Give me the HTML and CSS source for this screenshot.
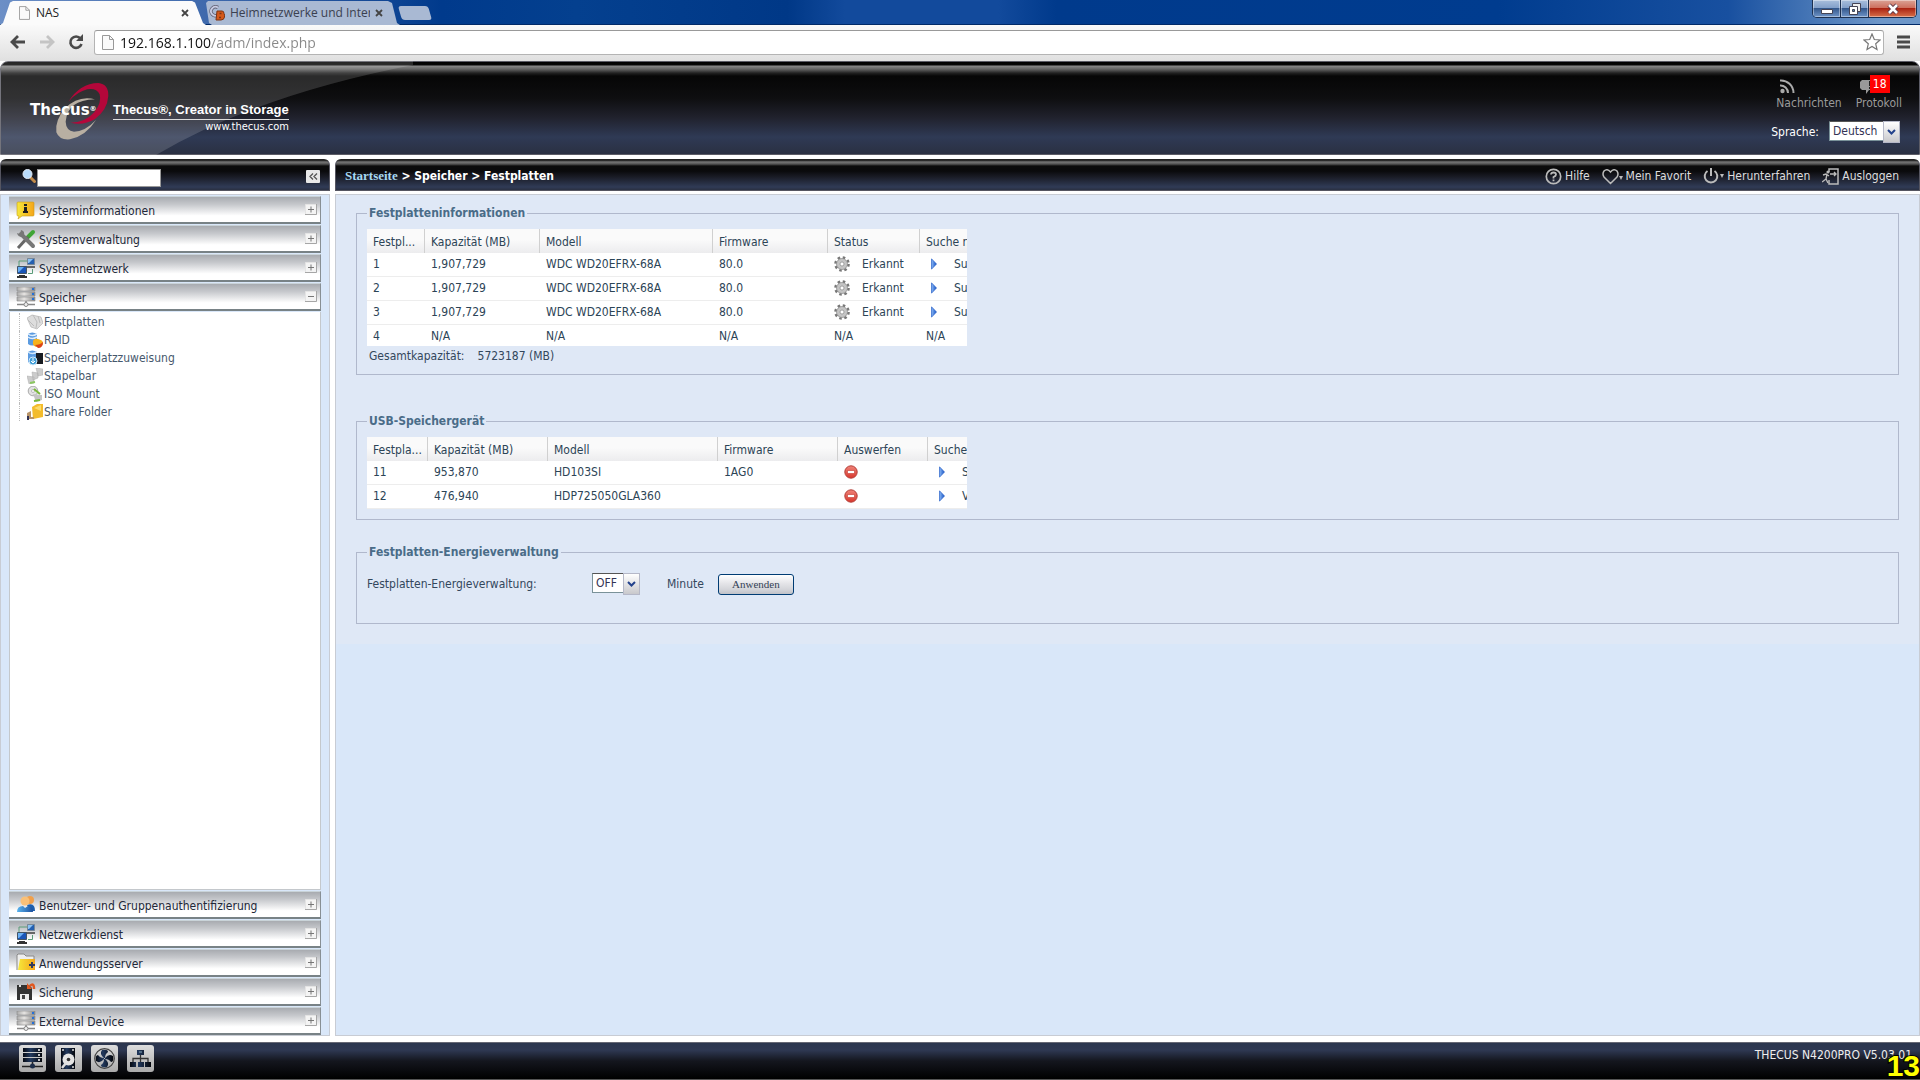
FILE: index.html
```
<!DOCTYPE html>
<html lang="de">
<head>
    <meta charset="UTF-8">
    <meta name="viewport" content="width=device-width, initial-scale=1.0">
    <title>NAS</title>
    <link rel="stylesheet" href="styles.css">
</head>
<body>

<!-- shared icons -->
<svg class="defs" aria-hidden="true">
    <defs>
        <linearGradient id="metal" x1="0" y1="0" x2="1" y2="0"><stop offset="0" stop-color="#aaa"/><stop offset=".4" stop-color="#e6e4e2"/><stop offset="1" stop-color="#888"/></linearGradient>
        <linearGradient id="gold" x1="0" y1="0" x2="1" y2="0"><stop offset="0" stop-color="#f6e83a"/><stop offset="1" stop-color="#f5a51b"/></linearGradient>
        <linearGradient id="blue" x1="0" y1="0" x2="1" y2="0"><stop offset="0" stop-color="#5ab4ee"/><stop offset="1" stop-color="#1b4f9e"/></linearGradient>
        <linearGradient id="ink" x1="0" y1="0" x2="1" y2="0"><stop offset="0" stop-color="#060a12"/><stop offset=".4" stop-color="#22395e"/><stop offset="1" stop-color="#05070c"/></linearGradient>
        <linearGradient id="play" x1="0" y1="0" x2="1" y2="0"><stop offset="0" stop-color="#8ab8f4"/><stop offset="1" stop-color="#1350c4"/></linearGradient>
        <linearGradient id="red" x1="0" y1="0" x2="0" y2="1"><stop offset="0" stop-color="#f0857a"/><stop offset="1" stop-color="#d8362c"/></linearGradient>
    </defs>
    <symbol id="i-page" viewBox="0 0 12 15"><path d="M.5 .5H7.500L11.500 4.500V14.500H.5Z" fill="#fafafa" stroke="#999"/><path d="M7.500 .5V4.500H11.500" fill="none" stroke="#999"/></symbol>
    <symbol id="i-close" viewBox="0 0 8 8"><path d="M1 1L7 7M7 1L1 7" stroke="#444" stroke-width="1.800"/></symbol>
    <symbol id="i-plus" viewBox="0 0 12 11"><path d="M.5 .5H11.500V10.500H.5Z" fill="#f4f4f4" stroke="#e4e4e4"/><path d="M0 10.500H11.500V0" fill="none" stroke="#a6a6a6"/><path d="M3 5.500H9M6 2.500V8.500" stroke="#777"/></symbol>
    <symbol id="i-minus" viewBox="0 0 12 11"><path d="M.5 .5H11.500V10.500H.5Z" fill="#f4f4f4" stroke="#e4e4e4"/><path d="M0 10.500H11.500V0" fill="none" stroke="#a6a6a6"/><path d="M3 5.500H9" stroke="#777"/></symbol>
    <symbol id="i-info" viewBox="0 0 20 20"><path d="M2 2H17Q18 2 18 3V15Q18 16 17 16H6L2 19L3 16H2Q1 16 1 15V3Q1 2 2 2Z" fill="url(#gold)" stroke="#c79a18" stroke-width=".6"/><path d="M8 4H11V6H8ZM8 7H11V11H12V13H7V11H8Z" fill="#222"/></symbol>
    <symbol id="i-tools" viewBox="0 0 20 20"><path d="M17 3L12 8" stroke="#3fa535" stroke-width="4" stroke-linecap="round"/><path d="M12 8L2 19" stroke="#666" stroke-width="3"/><path d="M5 5L17 17" stroke="#777" stroke-width="4" stroke-linecap="round"/><path d="M1 4L4 5L5 1Q9 2 8 6L6 8Q2 8 1 4Z" fill="#777"/></symbol>
    <symbol id="i-net" viewBox="0 0 20 20"><path d="M3 8V3H11M12 15.500H16.500V11" fill="none" stroke="#5a9c78"/><path d="M11.500 .5H18.500V6.500H11.500Z" fill="#2560b0" stroke="#789"/><path d="M12 1H17L13 5H12Z" fill="#8cc2f4"/><path d="M10 8H19V10H10Z" fill="#666"/><path d="M1.500 8.500H10.500V15.500H1.500Z" fill="#1a56b8" stroke="#456"/><path d="M2 9H8L3 14H2Z" fill="#6ab0f4"/><path d="M3 17H9V18H11V20H1V18H3Z" fill="#333"/></symbol>
    <symbol id="i-server" viewBox="0 0 20 20"><path d="M1 0H19V4H1ZM1 5H19V9H1ZM1 10H19V14H1Z" fill="url(#metal)" stroke="#8c8c8c" stroke-width=".6"/><path d="M16 2H18M16 7H18M16 12H18" stroke="#2470d8" stroke-width="2"/><path d="M1 17.500H19M10 14V17" stroke="#888" stroke-width="1.500"/><circle cx="10" cy="17.500" r="2" fill="#eee" stroke="#888"/></symbol>
    <symbol id="i-users" viewBox="0 0 20 20"><circle cx="14" cy="5" r="4" fill="#f0a04c"/><path d="M11 10Q19 7 19 16H14Z" fill="#1d5fae"/><circle cx="9" cy="6" r="4.500" fill="#f9c078"/><path d="M1 17Q1 11 7 11L9 13L12 11Q17 11 17 17Z" fill="url(#blue)"/></symbol>
    <symbol id="i-folder" viewBox="0 0 20 20"><path d="M1 17V2L2 1H8L10 3H18V6" fill="#eee" stroke="#888"/><path d="M4 6H19V17H2Z" fill="url(#gold)"/><path d="M13 12H19M16 9V15" stroke="#333a5c" stroke-width="2"/></symbol>
    <symbol id="i-backup" viewBox="0 0 20 20"><path d="M1 3H13L16 6V18H1Z" fill="#333"/><path d="M3 3H5V5H3Z" fill="#ddd"/><path d="M4 12H13V18H4Z" fill="#eee"/><path d="M6 13H9V17H6Z" fill="#444"/><path d="M14 4Q18 0 18 7" fill="none" stroke="#e2571e" stroke-width="2.500"/><path d="M11 1V7H16Z" fill="#e2571e"/></symbol>
    <symbol id="i-gear" viewBox="0 0 16 16"><circle cx="8" cy="8" r="6.500" fill="none" stroke="#777" stroke-width="2.600" stroke-dasharray="2.500 2.600"/><circle cx="8" cy="8" r="5.500" fill="#c4c4c4" stroke="#888" stroke-width=".7"/><circle cx="8" cy="8" r="2" fill="#fff" stroke="#888" stroke-width=".7"/></symbol>
    <symbol id="i-play" viewBox="0 0 6 12"><path d="M.5 .8L5.500 6L.5 11.200Z" fill="url(#play)" stroke="#2a62c8" stroke-width=".7"/></symbol>
    <symbol id="i-stop" viewBox="0 0 14 14"><circle cx="7" cy="7" r="6.200" fill="url(#red)" stroke="#b4403a"/><path d="M3.500 5.500H10.500V8.500H3.500Z" fill="#fff" stroke="#c4382e" stroke-width=".6"/></symbol>
    <symbol id="i-chev" viewBox="0 0 9 6"><path d="M1 1L4.500 4.500L8 1" fill="none" stroke="#23428c" stroke-width="2"/></symbol>
</svg>

<div class="titlebar">
    <div class="tabs">
        <div class="tab tab-active">
            <svg class="tab-icon" width="11" height="14"><use href="#i-page"/></svg>
            <span class="tab-title">NAS</span>
            <button class="tab-close" aria-label="Tab schließen"><svg width="8" height="8"><use href="#i-close"/></svg></button>
        </div>
        <div class="tab tab-back">
            <svg class="tab-icon" width="16" height="16" viewBox="0 0 16 16"><path d="M9 2.500A4.500 4.500 0 1 0 9 10" fill="none" stroke="#667" stroke-width="3.500"/><path d="M9 2.500A4.500 4.500 0 1 0 9 10" fill="none" stroke="#c8cce4" stroke-width="1.800"/><path d="M8 6H13Q15 6 15 8.500Q16 10 15.500 12Q15 15 12 15H7Z" fill="#d4581a" stroke="#7c3414"/><path d="M10.500 8.500H12.500M10 12.500H12" stroke="#7c3414" stroke-width="1.500"/></svg>
            <span class="tab-title">Heimnetzwerke und Intern</span>
            <button class="tab-close" aria-label="Tab schließen"><svg width="8" height="8"><use href="#i-close"/></svg></button>
        </div>
        <button class="tab-new" aria-label="Neuer Tab"></button>
    </div>
    <div class="win-buttons">
        <button class="win" aria-label="Minimieren"><svg width="12" height="12" viewBox="0 0 12 12"><path d="M.5 6.500H11.500V10.500H.5Z" fill="#fff" stroke="#445"/></svg></button>
        <button class="win" aria-label="Verkleinern"><svg width="12" height="12" viewBox="0 0 12 12"><path d="M3.500 .5H11.500V8.500H3.500Z" fill="#eee" stroke="#445"/><path d="M.5 3.500H8.500V11.500H.5Z" fill="#fff" stroke="#445"/><path d="M3.500 6.500H5.500V8.500H3.500Z" fill="#58a" stroke="#445"/></svg></button>
        <button class="win win-close" aria-label="Schließen"><svg width="12" height="12" viewBox="0 0 12 12"><path d="M2 2L10 10M10 2L2 10" stroke="#534" stroke-width="4.500"/><path d="M2 2L10 10M10 2L2 10" stroke="#fff" stroke-width="2.600"/></svg></button>
    </div>
</div>

<div class="toolbar">
    <button class="nav" aria-label="Zurück"><svg width="16" height="14" viewBox="0 0 16 14"><path d="M8 1L2 7L8 13M2 7H15" fill="none" stroke="#4a4a4a" stroke-width="2.800"/></svg></button>
    <button class="nav" aria-label="Vorwärts"><svg width="16" height="14" viewBox="0 0 16 14"><path d="M8 1L14 7L8 13M14 7H1" fill="none" stroke="#c4c4c4" stroke-width="2.800"/></svg></button>
    <button class="nav" aria-label="Neu laden"><svg width="16" height="16" viewBox="0 0 16 16"><path d="M12.500 4.500A5.700 5.700 0 1 0 13.500 10" fill="none" stroke="#4a4a4a" stroke-width="2.600"/><path d="M15 0V7H8Z" fill="#4a4a4a"/></svg></button>
    <div class="omnibox">
        <svg width="12" height="15"><use href="#i-page"/></svg>
        <input class="url" type="text" value="192.168.1.100/adm/index.php" aria-label="Adresse">
        <button class="star" aria-label="Lesezeichen"><svg width="18" height="18" viewBox="0 0 18 18"><path d="M9 1L11.300 6.500L17 7L12.700 10.800L14 16.500L9 13.500L4 16.500L5.300 10.800L1 7L6.700 6.500Z" fill="#fff" stroke="#777" stroke-width="1.200"/></svg></button>
    </div>
    <button class="menu" aria-label="Menü"><svg width="13" height="14" viewBox="0 0 13 14"><path d="M0 2H13M0 7H13M0 12H13" stroke="#4a4a4a" stroke-width="3"/></svg></button>
</div>

<header class="header">
    <svg class="brand" width="420" height="94" viewBox="0 0 420 94">
        <path d="M0 0H413V4Q258 34 156 94H0Z" fill="#fff" fill-opacity=".15"/>
        <g transform="scale(.3333) translate(0 -183)">
            <path d="M205 305Q240 250 295 249Q326 252 325 288Q322 330 285 357Q250 378 212 368Q255 368 283 337Q306 308 299 283Q290 264 262 268Q232 275 205 305Z" fill="#b4073a"/>
            <path d="M285 298Q235 285 195 325Q164 362 169 397Q178 421 210 418Q258 408 288 360Q255 395 222 395Q198 392 197 365Q202 300 285 298Z" fill="#b8afa2"/>
        </g>
        <text x="30" y="54" class="brand-name">Thecus<tspan class="brand-reg" dy="-4">®</tspan></text>
        <text x="113" y="53" class="brand-slogan">Thecus®, Creator in Storage</text>
        <path d="M113 58.500H289" stroke="#ddd"/>
        <text x="289" y="69" text-anchor="end" class="brand-url">www.thecus.com</text>
    </svg>
    <div class="header-tools">
        <div class="notices">
            <a href="#" class="notice">
                <svg width="15" height="15" viewBox="0 0 15 15"><circle cx="2.500" cy="12" r="2.200" fill="#aaa"/><path d="M0 6.500A7.500 7.500 0 0 1 8 14M0 1.500A12.500 12.500 0 0 1 13.500 14" fill="none" stroke="#aaa" stroke-width="2"/></svg>
                Nachrichten
            </a>
            <a href="#" class="notice">
                <svg width="15" height="15" viewBox="0 0 15 15"><path d="M2 1H13V11H9L6 15V11H2L0 9V3Z" fill="#999"/><path d="M10 2V7M10 8V10" stroke="#222" stroke-width="2"/></svg>
                Protokoll
                <span class="badge">18</span>
            </a>
        </div>
        <div class="language">
            <label for="lang">Sprache:</label>
            <span class="combo">
                <select id="lang" class="combo-lang"><option>Deutsch</option><option>English</option></select>
                <span class="combo-arrow"><svg width="9" height="6"><use href="#i-chev"/></svg></span>
            </span>
        </div>
    </div>
</header>

<div class="layout">
    <aside class="sidebar">
        <div class="bar search-bar">
            <svg width="14" height="14" viewBox="0 0 14 14"><path d="M8.500 8.500L12.500 12.500" stroke="#c08a4a" stroke-width="3" stroke-linecap="round"/><circle cx="5.500" cy="5" r="4.500" fill="#b9dcfb" stroke="#e4ecf6"/></svg>
            <input class="search" type="text" aria-label="Suche">
            <button class="collapse" aria-label="Einklappen"><svg width="9" height="7" viewBox="0 0 9 7"><path d="M4 .5L1 3.500L4 6.500M8 .5L5 3.500L8 6.500" fill="none" stroke="#555" stroke-width="1.300"/></svg></button>
        </div>
        <nav class="panel menu-panel">
            <button class="group"><svg width="20" height="20"><use href="#i-info"/></svg><span>Systeminformationen</span><svg width="12" height="11"><use href="#i-plus"/></svg></button>
            <button class="group"><svg width="20" height="20"><use href="#i-tools"/></svg><span>Systemverwaltung</span><svg width="12" height="11"><use href="#i-plus"/></svg></button>
            <button class="group"><svg width="20" height="20"><use href="#i-net"/></svg><span>Systemnetzwerk</span><svg width="12" height="11"><use href="#i-plus"/></svg></button>
            <button class="group"><svg width="20" height="20"><use href="#i-server"/></svg><span>Speicher</span><svg width="12" height="11"><use href="#i-minus"/></svg></button>
            <ul class="tree">
                <li><a href="#"><svg width="16" height="16" viewBox="0 0 16 16"><path d="M0 4L5 1L14 3L16 9L10 15L4 13Z" fill="#ddd" stroke="#aaa" stroke-width=".6"/><path d="M6 1L10 8L9 14M1 6L7 12M11 2L13 9" fill="none" stroke="#bbb"/></svg>Festplatten</a></li>
                <li><a href="#"><svg width="16" height="16" viewBox="0 0 16 16"><path d="M1 2Q5 -1 10 2V12Q5 15 1 12Z" fill="#5b9be0"/><path d="M1 5Q5 8 10 5M1 2Q5 5 10 2" fill="none" stroke="#e0eefc" stroke-width="1.500"/><path d="M6 9Q7 6 11 7Q16 8 16 11T11 15Q5 15 6 9Z" fill="#f7b21c"/><path d="M8 13Q13 13 16 10Q16 16 11 16Z" fill="#dc4418"/></svg>RAID</a></li>
                <li><a href="#"><svg width="16" height="16" viewBox="0 0 16 16"><path d="M1 2Q5 -1 10 2V12Q5 15 1 12Z" fill="#5b9be0"/><path d="M1 2Q5 5 10 2" fill="none" stroke="#d0e6fa" stroke-width="1.500"/><path d="M9 3H16V14H9Z" fill="#181c22"/><circle cx="6" cy="11" r="4" fill="#3f9ed8" stroke="#cfe8fa"/><path d="M6 8V13M4 11L6 13L8 11" fill="none" stroke="#fff"/></svg>Speicherplatzzuweisung</a></li>
                <li><a href="#"><svg width="16" height="16" viewBox="0 0 16 16"><path d="M9 0L16 1V7L11 8ZM5 4L11 5V10L6 12ZM0 8L7 9V15L2 16Z" fill="#ccc" stroke="#aaa" stroke-width=".5"/><path d="M3 15L8 14" stroke="#8cc860" stroke-width="2"/></svg>Stapelbar</a></li>
                <li><a href="#"><svg width="16" height="16" viewBox="0 0 16 16"><circle cx="6" cy="5" r="4.800" fill="#e2e2e2" stroke="#aaa"/><circle cx="6" cy="5" r="1.500" fill="#fff" stroke="#bbb"/><path d="M6 8L15 9V14L9 16Z" fill="#c4c4c4"/><path d="M7 3L13 8M7 15L13 14" stroke="#78b838" stroke-width="2"/></svg>ISO Mount</a></li>
                <li><a href="#"><svg width="16" height="16" viewBox="0 0 16 16"><path d="M5 3L10 0H16V13L6 15Z" fill="#f3bc2c"/><path d="M7 4L14 1V7Z" fill="#fbdc6c"/><path d="M0 9L4 7V13H7V15H0Z" fill="#b89468"/><path d="M0 12H2V16H0Z" fill="#335"/></svg>Share Folder</a></li>
            </ul>
            <button class="group"><svg width="20" height="20"><use href="#i-users"/></svg><span>Benutzer- und Gruppenauthentifizierung</span><svg width="12" height="11"><use href="#i-plus"/></svg></button>
            <button class="group"><svg width="20" height="20"><use href="#i-net"/></svg><span>Netzwerkdienst</span><svg width="12" height="11"><use href="#i-plus"/></svg></button>
            <button class="group"><svg width="20" height="20"><use href="#i-folder"/></svg><span>Anwendungsserver</span><svg width="12" height="11"><use href="#i-plus"/></svg></button>
            <button class="group"><svg width="20" height="20"><use href="#i-backup"/></svg><span>Sicherung</span><svg width="12" height="11"><use href="#i-plus"/></svg></button>
            <button class="group"><svg width="20" height="20"><use href="#i-server"/></svg><span>External Device</span><svg width="12" height="11"><use href="#i-plus"/></svg></button>
        </nav>
    </aside>

    <main class="main">
        <div class="bar top-bar">
            <div class="crumbs"><a href="#">Startseite</a> &gt; Speicher &gt; Festplatten</div>
            <div class="actions">
                <a href="#"><svg width="17" height="17" viewBox="0 0 17 17"><circle cx="8.500" cy="8.500" r="7.200" fill="none" stroke="#bbb" stroke-width="1.700"/><path d="M6 6.500Q6 4.500 8.500 4.500T11 6.500Q11 8 8.500 9V10.500M8.500 11.500V13.300" fill="none" stroke="#bbb" stroke-width="1.800"/></svg>Hilfe</a>
                <a href="#"><svg width="21" height="17" viewBox="0 0 21 17"><path d="M8.500 15.500L2 9Q0 6 2 3Q5 0 8.500 4Q12 0 15 3Q17 6 15 9Z" fill="none" stroke="#bbb" stroke-width="1.500"/><path d="M17 8H21L19 12Z" fill="#bbb"/></svg>Mein Favorit</a>
                <a href="#"><svg width="21" height="17" viewBox="0 0 21 17"><path d="M4.500 3A6.300 6.300 0 1 0 11.500 3M8 0V8" fill="none" stroke="#bbb" stroke-width="2"/><path d="M17 6H21L19 10Z" fill="#bbb"/></svg>Herunterfahren</a>
                <a href="#"><svg width="17" height="17" viewBox="0 0 17 17"><path d="M7 4V1H16V16H7V12" fill="none" stroke="#bbb" stroke-width="1.500"/><circle cx="6" cy="4" r="1.600" fill="#bbb"/><path d="M1 7L4 6L7 8M5 6L4 11L6 15M4 11L0 14M8 6H14M12 4L14 6L12 8" fill="none" stroke="#bbb" stroke-width="1.400"/></svg>Ausloggen</a>
            </div>
        </div>
        <div class="panel content-panel">
            <form class="content">
                <fieldset class="box box-disks">
                    <legend>Festplatteninformationen</legend>
                    <div class="grid grid-disks">
                        <table class="disks">
                            <colgroup><col class="w58"><col class="w115"><col class="w173"><col class="w115"><col class="w92"><col class="w115"></colgroup>
                            <thead>
                                <tr><th>Festpl...</th><th>Kapazität (MB)</th><th>Modell</th><th>Firmware</th><th>Status</th><th>Suche nach</th></tr>
                            </thead>
                            <tbody>
                                <tr><td>1</td><td>1,907,729</td><td>WDC WD20EFRX-68A</td><td>80.0</td><td><span class="state"><svg width="16" height="16"><use href="#i-gear"/></svg>Erkannt</span></td><td><span class="scan"><svg width="6" height="12"><use href="#i-play"/></svg>Suchen</span></td></tr>
                                <tr><td>2</td><td>1,907,729</td><td>WDC WD20EFRX-68A</td><td>80.0</td><td><span class="state"><svg width="16" height="16"><use href="#i-gear"/></svg>Erkannt</span></td><td><span class="scan"><svg width="6" height="12"><use href="#i-play"/></svg>Suchen</span></td></tr>
                                <tr><td>3</td><td>1,907,729</td><td>WDC WD20EFRX-68A</td><td>80.0</td><td><span class="state"><svg width="16" height="16"><use href="#i-gear"/></svg>Erkannt</span></td><td><span class="scan"><svg width="6" height="12"><use href="#i-play"/></svg>Suchen</span></td></tr>
                                <tr><td>4</td><td>N/A</td><td>N/A</td><td>N/A</td><td>N/A</td><td>N/A</td></tr>
                            </tbody>
                        </table>
                    </div>
                    <div class="total"><span>Gesamtkapazität:</span><span>5723187 (MB)</span></div>
                </fieldset>

                <fieldset class="box box-usb">
                    <legend>USB-Speichergerät</legend>
                    <div class="grid">
                        <table class="usb">
                            <colgroup><col class="w61"><col class="w120"><col class="w170"><col class="w120"><col class="w90"><col class="w115"></colgroup>
                            <thead>
                                <tr><th>Festpla...</th><th>Kapazität (MB)</th><th>Modell</th><th>Firmware</th><th>Auswerfen</th><th>Suche nach</th></tr>
                            </thead>
                            <tbody>
                                <tr><td>11</td><td>953,870</td><td>HD103SI</td><td>1AG0</td><td><span class="state"><svg width="14" height="14"><use href="#i-stop"/></svg></span></td><td><span class="scan"><svg width="6" height="12"><use href="#i-play"/></svg>Suchen</span></td></tr>
                                <tr><td>12</td><td>476,940</td><td>HDP725050GLA360</td><td></td><td><span class="state"><svg width="14" height="14"><use href="#i-stop"/></svg></span></td><td><span class="scan"><svg width="6" height="12"><use href="#i-play"/></svg>Verify</span></td></tr>
                            </tbody>
                        </table>
                    </div>
                </fieldset>

                <fieldset class="box box-power">
                    <legend>Festplatten-Energieverwaltung</legend>
                    <div class="power-row">
                        <label for="power">Festplatten-Energieverwaltung:</label>
                        <span class="combo">
                            <select id="power" class="combo-power"><option>OFF</option><option>30</option></select>
                            <span class="combo-arrow"><svg width="9" height="6"><use href="#i-chev"/></svg></span>
                        </span>
                        <span class="unit">Minute</span>
                        <button type="button" class="apply">Anwenden</button>
                    </div>
                </fieldset>
            </form>
        </div>
    </main>
</div>

<footer class="footer">
    <div class="status-buttons">
        <button class="status" aria-label="System"><svg width="21" height="21" viewBox="0 0 21 21"><path d="M1 0H20V4H1ZM1 5H20V9H1ZM1 10H20V14H1Z" fill="url(#ink)"/><path d="M16 2H18M16 7H18M16 12H18" stroke="#fff" stroke-width="1.500"/><path d="M0 18.500H21M10.500 14V18" stroke="#222" stroke-width="1.500"/><circle cx="10.500" cy="18" r="2.500" fill="#1c2c48"/></svg></button>
        <button class="status" aria-label="Festplatten"><svg width="21" height="21" viewBox="0 0 21 21"><path d="M3 0H17V21H3Z" fill="url(#ink)"/><circle cx="10.500" cy="11.500" r="6" fill="#e4e4e4"/><circle cx="10.500" cy="11.500" r="1.800" fill="#333"/><path d="M4 20L8 15" stroke="#ddd" stroke-width="2.500"/><path d="M4 2H6M14 2H16M14 19H16" stroke="#ddd" stroke-width="1.500"/></svg></button>
        <button class="status" aria-label="Lüfter"><svg width="21" height="21" viewBox="0 0 21 21"><circle cx="10.500" cy="10.500" r="9.800" fill="none" stroke="#444" stroke-width="1.200"/><path d="M10 10Q5 6 8 2Q14 1 14 4Q11 6 11 10ZM11 10Q15 5 19 8Q20 14 17 14Q15 11 11 11ZM11 11Q16 15 13 19Q7 20 7 17Q10 15 10 11ZM10 11Q6 16 2 13Q1 7 4 7Q6 10 10 10Z" fill="url(#ink)"/></svg></button>
        <button class="status" aria-label="Netzwerk"><svg width="21" height="21" viewBox="0 0 21 21"><path d="M7 2H14V7H7ZM0 14H6V19H0ZM8 14H14V19H8ZM15 14H21V19H15Z" fill="url(#ink)"/><path d="M10.500 7V14M3 14V10.500H18V14" fill="none" stroke="#333" stroke-width="1.300"/><path d="M9 4H12" stroke="#8ab"/></svg></button>
    </div>
    <span class="version">THECUS N4200PRO V5.03.01</span>
</footer>

<div class="fps">13</div>

</body>
</html>
```
FILE: styles.css
```
* {
    box-sizing: border-box;
}
body {
    margin: 0;
    height: 100vh;
    display: flex;
    flex-direction: column;
    overflow: hidden;
    background: #fff;
    font-family: "DejaVu Sans Condensed", "DejaVu Sans", sans-serif;
    font-size: 12px;
    line-height: 14px;
    color: #333;
}
button, input, select {
    font: inherit;
    margin: 0;
    padding: 0;
}
button {
    border: none;
    background: none;
}
svg {
    flex: none;
    display: block;
}
a {
    color: inherit;
    text-decoration: none;
}
.defs {
    position: absolute;
    width: 0;
    height: 0;
}

/* browser window */
.titlebar {
    flex: none;
    height: 25px;
    display: flex;
    justify-content: space-between;
    border-bottom: 1px solid #012a68;
    background: linear-gradient(90deg, #6c8fc6 0, #2c5aa2 15%, #003a8c 23%, #04408f 30%, #003887 41%, #124a9c 44%, #124a9c 52%, #003a8c 55%, #003c8f 78%, #1850a0 90%, #6d96c8 98%);
}
.tabs {
    display: flex;
    margin-top: 1px;
    height: 24px;
    font-family: "Open Sans", sans-serif;
}
.tab {
    display: flex;
    align-items: center;
    color: #222;
}
.tab-active {
    width: 206px;
    padding: 0 17px 0 19px;
    background: #fbfbfb;
    clip-path: polygon(0 100%, 3px 92%, 10px 6%, 13px 0, 192px 0, 195px 6%, 203px 92%, 206px 100%);
}
.tab-back {
    width: 194px;
    padding: 0 13px 0 3px;
    background: #a9b9d3;
    color: #3a4050;
    clip-path: polygon(6px 100%, 3px 92%, 0 8%, 2px 0, 182px 0, 186px 8%, 191px 92%, 194px 100%);
}
.tab-icon {
    margin-right: 6px;
}
.tab-back .tab-icon {
    margin-right: 5px;
}
.tab-title {
    flex: 1;
    overflow: hidden;
    white-space: nowrap;
}
.tab-back .tab-title {
    flex: none;
    width: 140px;
}
.tab-back .tab-close {
    margin-left: 5px;
}
.tab-new {
    width: 30px;
    height: 14px;
    margin-top: 5px;
    border-radius: 3px;
    background: #a9b9d3;
    transform: skewX(16deg);
}
.win-buttons {
    display: flex;
    height: 18px;
    margin-right: 3px;
    border: 1px solid #1c3050;
    border-top: none;
    border-radius: 0 0 5px 5px;
    overflow: hidden;
}
.win {
    width: 28px;
    display: flex;
    justify-content: center;
    align-items: center;
    border-right: 1px solid #1c3050;
    background: linear-gradient(#a9bfdc, #7f9dc8 50%, #34588c 50%, #6f95c8);
    box-shadow: inset 0 0 0 1px rgba(255, 255, 255, 0.4);
}
.win-close {
    width: 47px;
    border-right: none;
    background: linear-gradient(#dba396, #cc6a58 50%, #ab2412 50%, #d8704a);
}
.toolbar {
    flex: none;
    height: 36px;
    display: flex;
    align-items: center;
    gap: 13px;
    padding: 0 10px 2px;
    background: linear-gradient(#fafafa, #e0e0e0);
}
.nav {
    display: flex;
    align-items: center;
}
.omnibox {
    flex: 1;
    height: 25px;
    margin-left: -3px;
    display: flex;
    align-items: center;
    gap: 6px;
    padding: 0 4px 0 7px;
    border: 1px solid #b4b4b4;
    border-top-color: #999;
    border-radius: 3px;
    background: #fff;
}
.url {
    flex: 1;
    height: 22px;
    border: none;
    font-family: "Open Sans", sans-serif;
    font-size: 14px;
    /* host dark, path grey */
    background: linear-gradient(90deg, #111 91px, #888 91px);
    -webkit-background-clip: text;
    background-clip: text;
    color: transparent;
}
.star {
    margin-right: -2px;
}

/* NAS header */
.header {
    flex: none;
    height: 94px;
    display: flex;
    justify-content: space-between;
    border: 1px solid #5c5c66;
    border-radius: 8px 8px 0 0;
    background: linear-gradient(#000 0, #080808 3px, #888 4px, #666 7px, #222 11px, #060606 14px, #0e0e10 36px, #20212c 55px, #2f3a55 75px, #2a3042 92px);
    color: #fff;
}
.brand {
    margin: -1px;
}
.brand-name {
    font: bold 15px "DejaVu Sans", sans-serif;
    fill: #fff;
}
.brand-reg {
    font-size: 7px;
}
.brand-slogan {
    font: bold 13px "Liberation Sans", sans-serif;
    fill: #fff;
}
.brand-url {
    font: 11px "DejaVu Sans Condensed", sans-serif;
    fill: #fff;
}
.header-tools {
    display: flex;
    flex-direction: column;
    justify-content: space-between;
    align-items: flex-end;
    padding: 17px 17px 11px 0;
}
.notices {
    display: flex;
    gap: 14px;
}
.notice {
    position: relative;
    color: #9a9a9a;
}
.notice svg {
    margin: 0 0 2px 4px;
}
.badge {
    position: absolute;
    top: -4px;
    left: 14px;
    width: 20px;
    padding: 2px 0;
    background: #f00;
    color: #fff;
    text-align: center;
}
.language {
    display: flex;
    align-items: center;
    gap: 10px;
    margin-right: 2px;
}
.combo {
    display: flex;
    align-items: flex-start;
}
.combo select {
    appearance: none;
    height: 20px;
    padding: 0 3px;
    border: 1px solid #7a9299;
    border-top-color: #555;
    border-radius: 0;
    background: #fff;
    color: #335;
}
.combo-lang {
    width: 55px;
}
.combo-power {
    width: 32px;
}
.combo-arrow {
    width: 17px;
    height: 22px;
    display: flex;
    justify-content: center;
    align-items: center;
    margin-left: -1px;
    border: 1px solid #b5b8c8;
    background: linear-gradient(#fff, #c8c8cc);
}

/* two columns */
.layout {
    flex: 1;
    min-height: 0;
    display: flex;
    gap: 5px;
    padding: 4px 0 6px;
}
.sidebar {
    flex: none;
    width: 330px;
    display: flex;
    flex-direction: column;
}
.main {
    flex: 1;
    min-width: 0;
    display: flex;
    flex-direction: column;
}
.bar {
    flex: none;
    height: 32px;
    display: flex;
    align-items: center;
    margin-bottom: 3px;
    padding-top: 2px;
    border: 1px solid #555560;
    border-top-color: #222;
    border-radius: 6px 6px 0 0;
    background: linear-gradient(#111 0, #777 2px, #555 4px, #0c0c0c 6px, #0a0a0c 11px, #1a1c26 17px, #303b56 27px, #2a3042 30px);
    color: #fff;
}
.panel {
    flex: 1;
    min-height: 0;
    border: 1px solid #c8ccd4;
    background: #d9e7f9;
}
.search-bar {
    padding-left: 21px;
    padding-right: 9px;
}
.search {
    width: 124px;
    height: 18px;
    margin: 4px auto 0 1px;
    border: 1px solid #999;
    background: #fff;
}
.collapse {
    width: 14px;
    height: 13px;
    display: flex;
    justify-content: center;
    align-items: center;
    background: #e8e8e8;
    border-radius: 1px;
}
.menu-panel {
    display: flex;
    flex-direction: column;
    padding: 1px 8px 0;
}
.group {
    flex: none;
    height: 28px;
    margin-bottom: 1px;
    display: flex;
    align-items: center;
    padding: 0 3px 0 7px;
    border-top: 1px solid #c9d3d8;
    border-right: 1px solid #888f94;
    border-bottom: 2px solid #788286;
    background: linear-gradient(#a8abb0, #c6c8cc 30%, #fff 75%);
    color: #222838;
    text-align: left;
}
.group:last-child {
    margin-bottom: 0;
}
.group span {
    flex: 1;
    margin: 3px 0 0 3px;
}
.tree {
    flex: 1;
    margin: 0 0 1px;
    padding: 1px 0 0 9px;
    border: 1px solid #c4c8cc;
    border-top: none;
    background: #fff;
    list-style: none;
    color: #46586c;
}
.tree li {
    height: 18px;
    padding-left: 7px;
    border-left: 1px dotted #bbb;
}
.tree a {
    display: flex;
    align-items: center;
    gap: 1px;
    height: 18px;
}

.top-bar {
    justify-content: space-between;
    padding-left: 9px;
    padding-right: 20px;
}
.crumbs {
    font-weight: bold;
}
.crumbs a {
    font-family: "Liberation Serif", serif;
    font-size: 13px;
    color: #a6d8f0;
}
.actions {
    display: flex;
    gap: 12px;
    color: #ddd;
}
.actions a {
    display: flex;
    align-items: center;
    gap: 3px;
}
.content {
    padding: 11px 20px 20px;
    background: #dfe8f6;
}
.box {
    margin: 0;
    padding: 9px 10px 10px;
    border: 1px solid #b0b8cc;
}
.box legend {
    padding: 0 2px;
    color: #4a6c88;
    font-weight: bold;
}
.box-disks {
    margin-bottom: 39px;
    padding-bottom: 8px;
}
.box-usb {
    margin-bottom: 25px;
}
.box-power {
    padding-top: 14px;
    padding-bottom: 28px;
}
.grid {
    width: 600px;
    overflow: hidden;
}
.grid-disks {
    height: 117px;
}
.grid table {
    table-layout: fixed;
    border-collapse: separate;
    border-spacing: 0;
    background: #fff;
    color: #2c4456;
}
.disks {
    width: 668px;
}
.usb {
    width: 676px;
}
.grid th, .grid td {
    height: 24px;
    padding: 0 0 1px 6px;
    font-weight: normal;
    text-align: left;
    white-space: nowrap;
    overflow: hidden;
}
.grid th {
    padding-top: 1px;
    padding-bottom: 0;
    border-right: 1px solid #d0d0d0;
    background: linear-gradient(#fafafa 45%, #ececee);
}
.grid td {
    border-bottom: 1px solid #ededed;
}
.w58 { width: 58px; }
.w61 { width: 61px; }
.w90 { width: 90px; }
.w92 { width: 92px; }
.w115 { width: 115px; }
.w120 { width: 120px; }
.w170 { width: 170px; }
.w173 { width: 173px; }
.state {
    display: flex;
    align-items: center;
    gap: 12px;
}
.scan {
    display: flex;
    align-items: center;
    gap: 17px;
    padding-left: 5px;
}
.total {
    display: flex;
    gap: 13px;
    padding-left: 2px;
    line-height: 20px;
    color: #33475c;
}
.power-row {
    display: flex;
    align-items: center;
    color: #33475c;
}
.power-row label {
    width: 225px;
}
.unit {
    margin: 0 14px 0 27px;
}
.apply {
    width: 76px;
    height: 21px;
    border: 1px solid #003c74;
    border-radius: 3px;
    background: linear-gradient(#fff, #e4e4e8 45%, #d4d5da 75%, #c0c2c8);
    font-family: "Liberation Serif", serif;
    font-size: 11px;
    color: #333f55;
}

.footer {
    flex: none;
    height: 38px;
    display: flex;
    justify-content: space-between;
    padding: 2px 8px 0 19px;
    border-top: 1px solid #666874;
    border-bottom: 1px solid #555;
    background: linear-gradient(#2b364e, #2e3852 20%, #14161e 50%, #000);
    color: #eee;
}
.status-buttons {
    display: flex;
    gap: 9px;
}
.status {
    width: 27px;
    height: 27px;
    display: flex;
    justify-content: center;
    align-items: center;
    border-radius: 3px;
    background: linear-gradient(#ddd, #aaa);
}
.version {
    margin-top: 3px;
}
/* frame counter over the screen corner */
.fps {
    position: absolute;
    right: 0;
    bottom: 0;
    font: bold 30px "Liberation Sans Narrow", "Liberation Sans", sans-serif;
    line-height: 28px;
    color: #ff0;
    -webkit-text-stroke: 2px #000;
    paint-order: stroke fill;
}
```
